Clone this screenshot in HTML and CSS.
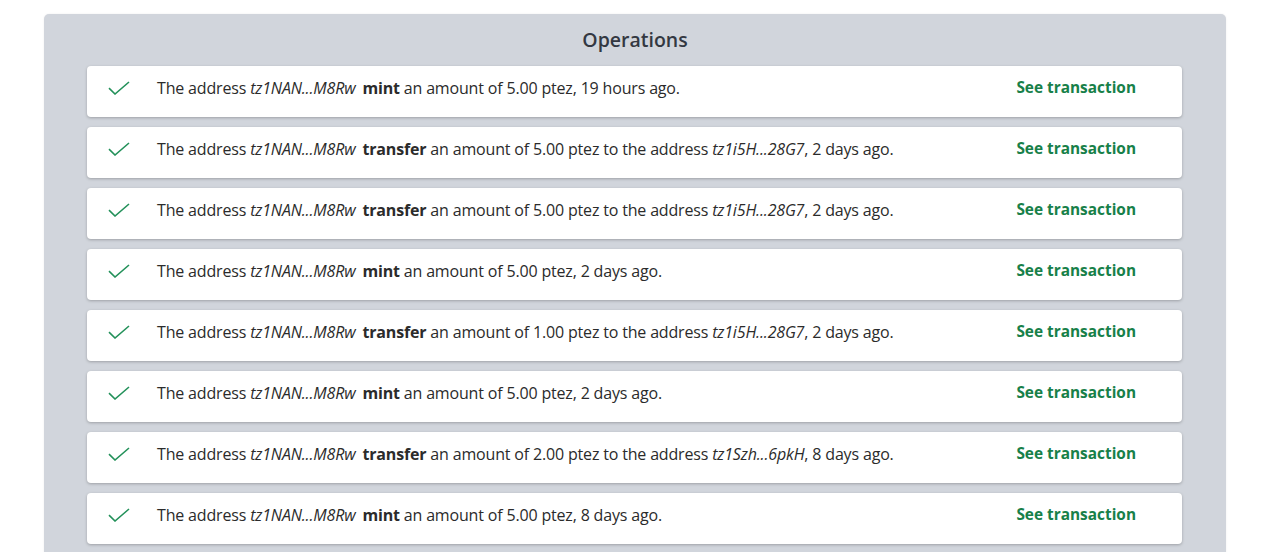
FILE: index.html
```html
<!DOCTYPE html>
<html>
<head>
<meta charset="utf-8">
<link rel="stylesheet" href="styles.css">
</head>
<body>
<section class="panel">
  <h2 class="title">Operations</h2>
  <ul class="ops">
    <li class="op"><span class="check"><svg width="22" height="14" viewBox="0 0 22 14"><path d="M1 7.2 L7 13 L21 1" fill="none" stroke="#23915a" stroke-width="1.6"/></svg></span><p class="msg">The address <em class="from">tz1NAN...M8Rw</em> <b>mint</b> an amount of 5.00 ptez, 19 hours ago.</p><a class="link" href="#">See transaction</a></li>
    <li class="op"><span class="check"><svg width="22" height="14" viewBox="0 0 22 14"><path d="M1 7.2 L7 13 L21 1" fill="none" stroke="#23915a" stroke-width="1.6"/></svg></span><p class="msg">The address <em class="from">tz1NAN...M8Rw</em> <b>transfer</b> an amount of 5.00 ptez to the address <em>tz1i5H...28G7</em>, 2 days ago.</p><a class="link" href="#">See transaction</a></li>
    <li class="op"><span class="check"><svg width="22" height="14" viewBox="0 0 22 14"><path d="M1 7.2 L7 13 L21 1" fill="none" stroke="#23915a" stroke-width="1.6"/></svg></span><p class="msg">The address <em class="from">tz1NAN...M8Rw</em> <b>transfer</b> an amount of 5.00 ptez to the address <em>tz1i5H...28G7</em>, 2 days ago.</p><a class="link" href="#">See transaction</a></li>
    <li class="op"><span class="check"><svg width="22" height="14" viewBox="0 0 22 14"><path d="M1 7.2 L7 13 L21 1" fill="none" stroke="#23915a" stroke-width="1.6"/></svg></span><p class="msg">The address <em class="from">tz1NAN...M8Rw</em> <b>mint</b> an amount of 5.00 ptez, 2 days ago.</p><a class="link" href="#">See transaction</a></li>
    <li class="op"><span class="check"><svg width="22" height="14" viewBox="0 0 22 14"><path d="M1 7.2 L7 13 L21 1" fill="none" stroke="#23915a" stroke-width="1.6"/></svg></span><p class="msg">The address <em class="from">tz1NAN...M8Rw</em> <b>transfer</b> an amount of 1.00 ptez to the address <em>tz1i5H...28G7</em>, 2 days ago.</p><a class="link" href="#">See transaction</a></li>
    <li class="op"><span class="check"><svg width="22" height="14" viewBox="0 0 22 14"><path d="M1 7.2 L7 13 L21 1" fill="none" stroke="#23915a" stroke-width="1.6"/></svg></span><p class="msg">The address <em class="from">tz1NAN...M8Rw</em> <b>mint</b> an amount of 5.00 ptez, 2 days ago.</p><a class="link" href="#">See transaction</a></li>
    <li class="op"><span class="check"><svg width="22" height="14" viewBox="0 0 22 14"><path d="M1 7.2 L7 13 L21 1" fill="none" stroke="#23915a" stroke-width="1.6"/></svg></span><p class="msg">The address <em class="from">tz1NAN...M8Rw</em> <b>transfer</b> an amount of 2.00 ptez to the address <em>tz1Szh...6pkH</em>, 8 days ago.</p><a class="link" href="#">See transaction</a></li>
    <li class="op"><span class="check"><svg width="22" height="14" viewBox="0 0 22 14"><path d="M1 7.2 L7 13 L21 1" fill="none" stroke="#23915a" stroke-width="1.6"/></svg></span><p class="msg">The address <em class="from">tz1NAN...M8Rw</em> <b>mint</b> an amount of 5.00 ptez, 8 days ago.</p><a class="link" href="#">See transaction</a></li>
  </ul>
</section>
</body>
</html>
```
FILE: styles.css
```css
html, body {
  margin: 0;
  padding: 0;
  background: #ffffff;
}
body {
  font-family: "Open Sans", "Noto Sans", sans-serif;
  color: #2b2b2b;
  overflow: hidden;
}
.panel {
  margin: 14px 0 0 44px;
  width: 1182px;
  background: #d1d5dc;
  border-radius: 5px;
  padding: 12px 0 40px;
  box-sizing: border-box;
  box-shadow: 0 0 2px rgba(0,0,0,0.08);
}
.title {
  margin: 0 0 12px;
  text-align: center;
  font-size: 19.5px;
  line-height: 28px;
  font-weight: 600;
  color: #333842;
}
.ops {
  list-style: none;
  margin: 0 44px 0 43px;
  padding: 0;
  display: flex;
  flex-direction: column;
  gap: 10px;
}
.op {
  display: flex;
  align-items: center;
  height: 51px;
  box-sizing: border-box;
  padding: 0 46px 8px 21px;
  background: #ffffff;
  border-radius: 4px;
  box-shadow: 0 1px 3px rgba(0,0,0,0.25);
}
.check {
  width: 22px;
  height: 14px;
  display: flex;
  margin: 0 27px 0 0;
}
.msg {
  margin: 0;
  flex: 1;
  font-size: 16px;
  letter-spacing: -0.17px;
  white-space: nowrap;
}
.msg em { font-style: italic; }
.msg em.from { margin-right: 3px; }
.msg b { font-weight: 700; }
.link {
  color: #178049;
  font-weight: 700;
  font-size: 15.4px;
  text-decoration: none;
  letter-spacing: 0;
}
```
